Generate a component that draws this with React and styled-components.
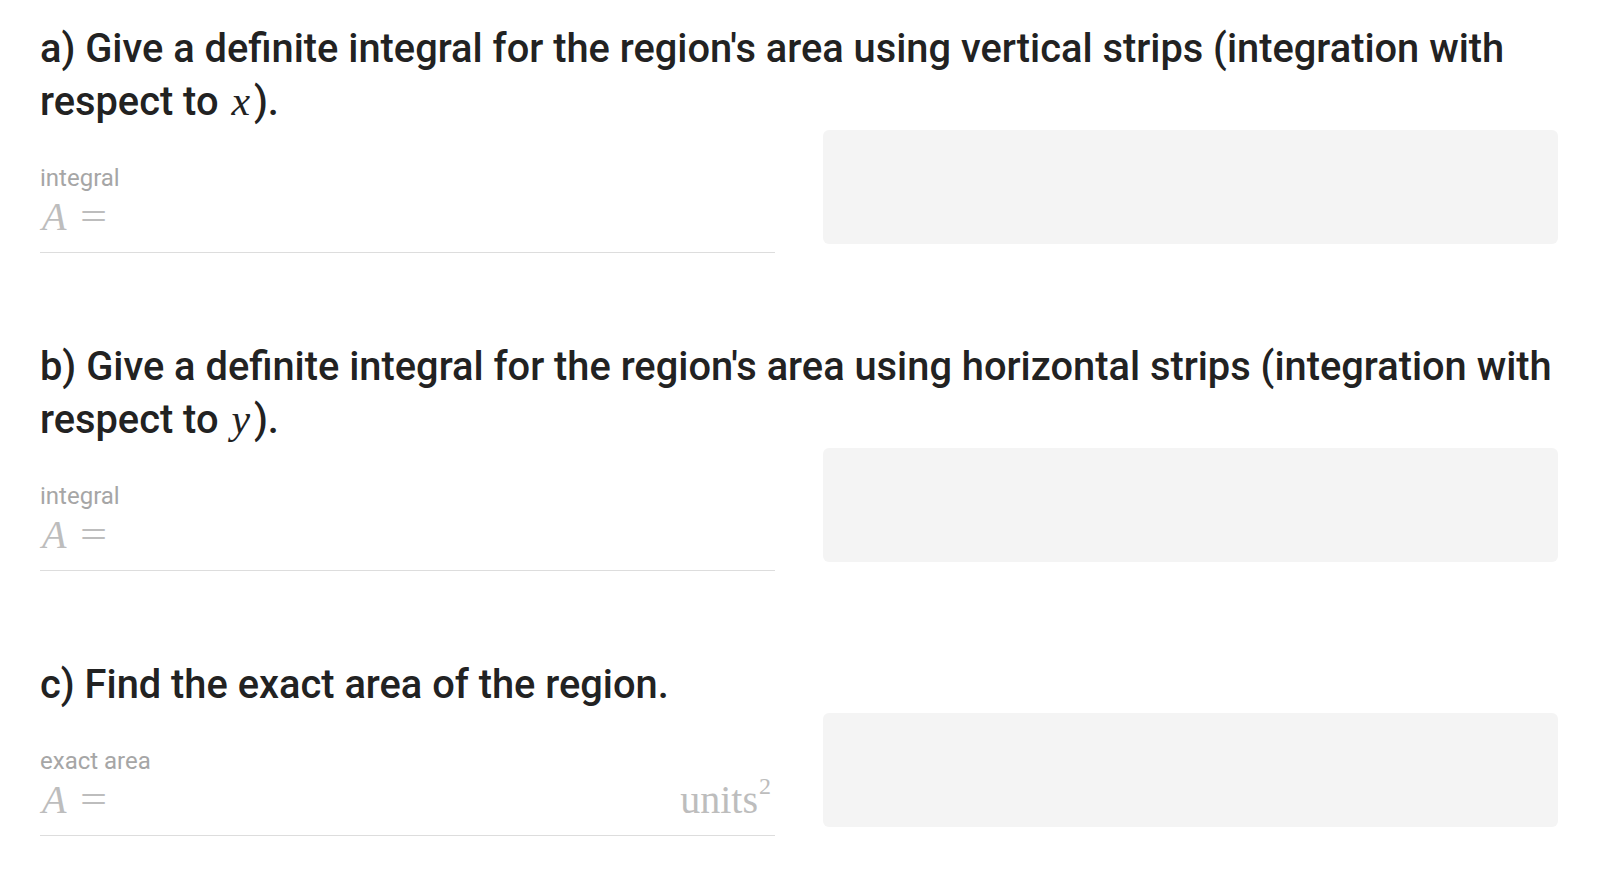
import React from "react";
import styled, { createGlobalStyle } from "styled-components";

const Global = createGlobalStyle`
  html, body { margin: 0; padding: 0; background: #ffffff; }
  body { font-family: Roboto, "Noto Sans", sans-serif; }
`;

const Page = styled.main`
  padding: 22px 41px 0 40px;
  display: flex;
  flex-direction: column;
  gap: 87px;
`;

const Section = styled.section`
  display: flex;
  flex-direction: column;
  gap: 2px;
`;

const Heading = styled.h2`
  margin: 0;
  font-family: Roboto, sans-serif;
  font-weight: 500;
  font-size: 39.8px;
  line-height: 53px;
  color: #222222;
`;

const MathVar = styled.span`
  display: inline-block;
  font-family: "Liberation Serif", serif;
  font-style: italic;
  font-weight: 400;
  font-size: 1.05em;
  line-height: 1;
  margin-left: 3px;
  padding-right: 4px;
`;

const AnswerRow = styled.div`
  display: flex;
  align-items: flex-start;
  gap: 48px;
`;

const Field = styled.div`
  flex: 1 1 0;
  display: flex;
  flex-direction: column;
  gap: 4px;
  padding-top: 33px;
  padding-bottom: 15px;
  border-bottom: 1px solid #dddddd;
`;

const FieldLabel = styled.div`
  font-family: Roboto, sans-serif;
  font-size: 24px;
  line-height: 30px;
  color: #a6a6a6;
`;

const FieldInput = styled.div`
  display: flex;
  align-items: baseline;
  height: 40px;
  line-height: 40px;
  font-family: "Liberation Serif", serif;
  font-size: 40px;
  color: #bdbdbd;
  padding-left: 2px;
  padding-right: 4px;
`;

const PlaceVar = styled.span`
  font-style: italic;
`;

const Eq = styled.span`
  margin-left: 14px;
  transform: scaleX(1.2);
  transform-origin: left center;
`;

const Units = styled.span`
  margin-left: auto;
  & sup {
    font-size: 0.6em;
    line-height: 0;
    vertical-align: 0.8em;
    margin-left: 1px;
  }
`;

const FeedbackBox = styled.div`
  flex: 1 1 0;
  height: 114px;
  background: #f4f4f4;
  border-radius: 6px;
`;

const sections = [
  {
    head: (
      <>
        a) Give a definite integral for the region's area using vertical strips
        (integration with respect to <MathVar>x</MathVar>).
      </>
    ),
    label: "integral",
  },
  {
    head: (
      <>
        b) Give a definite integral for the region's area using horizontal strips
        (integration with respect to <MathVar>y</MathVar>).
      </>
    ),
    label: "integral",
  },
  {
    head: <>c) Find the exact area of the region.</>,
    label: "exact area",
    units: true,
  },
];

export default function App() {
  return (
    <>
      <Global />
      <Page>
        {sections.map((s, i) => (
          <Section key={i}>
            <Heading>{s.head}</Heading>
            <AnswerRow>
              <Field>
                <FieldLabel>{s.label}</FieldLabel>
                <FieldInput>
                  <PlaceVar>A</PlaceVar>
                  <Eq>=</Eq>
                  {s.units && (
                    <Units>
                      units<sup>2</sup>
                    </Units>
                  )}
                </FieldInput>
              </Field>
              <FeedbackBox />
            </AnswerRow>
          </Section>
        ))}
      </Page>
    </>
  );
}
